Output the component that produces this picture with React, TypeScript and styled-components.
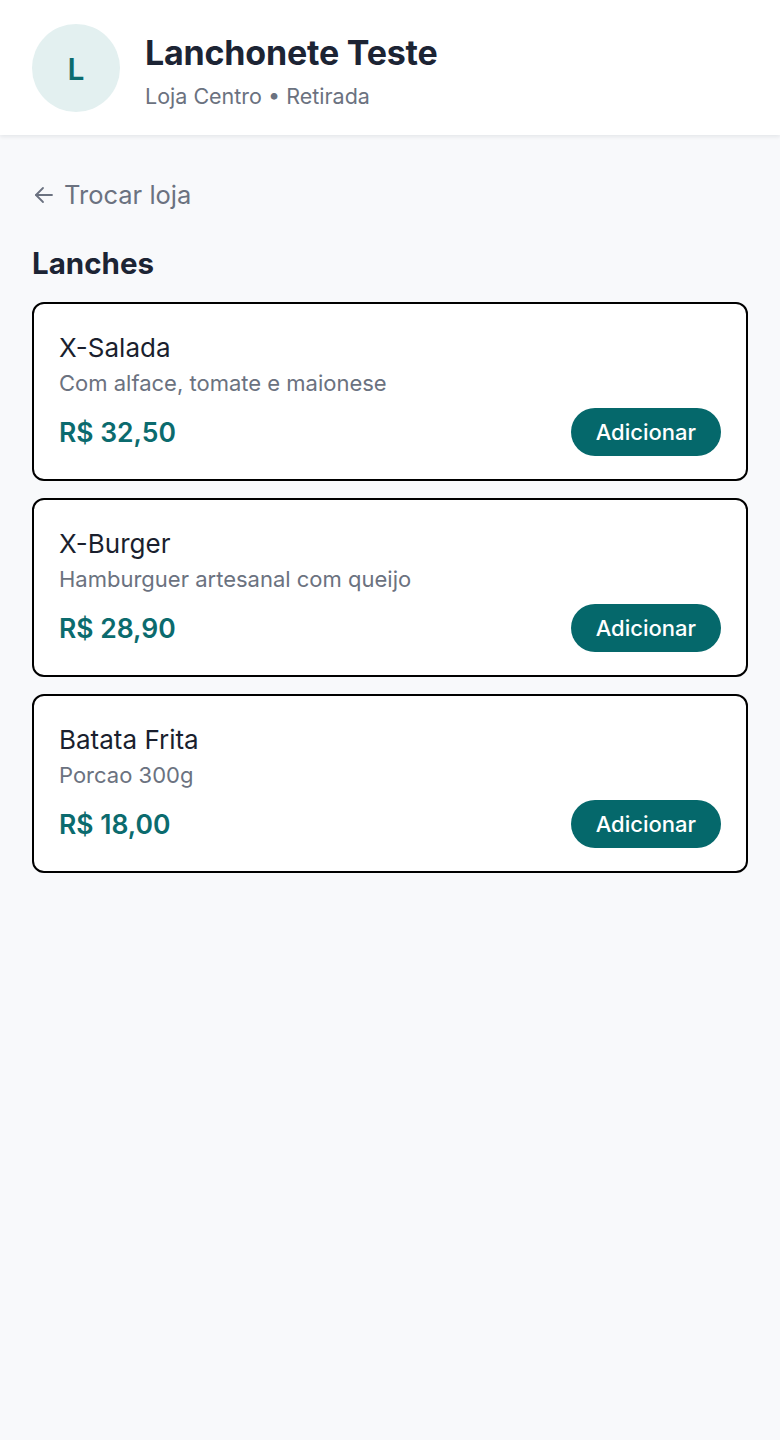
import React from "react";
import styled, { createGlobalStyle } from "styled-components";

const GlobalStyle = createGlobalStyle`
    * { box-sizing: border-box; }
    body {
        margin: 0;
        background: #f8f9fb;
        font-family: "Inter", "Noto Sans", sans-serif;
    }
`;

const Page = styled.div`
    min-height: 1440px;
    background: #f8f9fb;
`;

const Header = styled.header`
    display: flex;
    align-items: center;
    gap: 25px;
    height: 135px;
    padding: 0 32px;
    background: #ffffff;
    box-shadow: 0 2px 4px rgba(15, 23, 42, 0.08);
`;

const Avatar = styled.div`
    width: 88px;
    height: 88px;
    border-radius: 50%;
    background: #e3f0f0;
    color: #0b6b6e;
    display: flex;
    align-items: center;
    justify-content: center;
    font-size: 30px;
    font-weight: 600;
    padding-top: 3px;
`;

const StoreInfo = styled.div`
    display: flex;
    flex-direction: column;
    gap: 9px;
    margin-top: 7px;
`;

const StoreName = styled.h1`
    margin: 0;
    font-size: 34px;
    line-height: 40px;
    font-weight: 700;
    color: #1c2434;
    letter-spacing: -0.2px;
`;

const StoreMeta = styled.span`
    font-size: 21.5px;
    line-height: 28px;
    color: #6b7280;
`;

const Content = styled.main`
    padding: 44px 32px 40px;
`;

const BackLink = styled.a`
    display: inline-flex;
    align-items: center;
    gap: 8px;
    font-size: 25.5px;
    line-height: 32px;
    color: #6b7280;
    text-decoration: none;
    cursor: pointer;
`;

const SectionTitle = styled.h2`
    margin: 34px 0 21px;
    font-size: 29.5px;
    line-height: 36px;
    font-weight: 700;
    color: #1c2434;
`;

const List = styled.div`
    display: flex;
    flex-direction: column;
    gap: 17px;
`;

const Card = styled.div`
    background: #ffffff;
    border: 2px solid #000000;
    border-radius: 12px;
    padding: 28px 25px 23px;
`;

const ItemName = styled.div`
    font-size: 26px;
    line-height: 32px;
    color: #1a1f2e;
`;

const ItemDesc = styled.div`
    margin-top: 5px;
    font-size: 22px;
    line-height: 28px;
    color: #6b7280;
`;

const Footer = styled.div`
    display: flex;
    align-items: center;
    justify-content: space-between;
    margin-top: 11px;
`;

const Price = styled.span`
    font-size: 26.5px;
    font-weight: 600;
    color: #0b6b6e;
`;

const AddButton = styled.button`
    height: 48px;
    padding: 0 25px;
    border: none;
    border-radius: 24px;
    background: #05686b;
    color: #ffffff;
    font-family: inherit;
    font-size: 22px;
    font-weight: 500;
    cursor: pointer;
`;

const items = [
    { name: "X-Salada", desc: "Com alface, tomate e maionese", price: "R$ 32,50" },
    { name: "X-Burger", desc: "Hamburguer artesanal com queijo", price: "R$ 28,90" },
    { name: "Batata Frita", desc: "Porcao 300g", price: "R$ 18,00" },
];

const App: React.FC = () => {
    return (
        <Page>
            <GlobalStyle />
            <Header>
                <Avatar>L</Avatar>
                <StoreInfo>
                    <StoreName>Lanchonete Teste</StoreName>
                    <StoreMeta>Loja Centro • Retirada</StoreMeta>
                </StoreInfo>
            </Header>
            <Content>
                <BackLink>
                    <svg width="24" height="24" viewBox="0 0 24 24" fill="none" stroke="#6b7280" strokeWidth="1.8" strokeLinecap="round" strokeLinejoin="round">
                        <path d="M20 12H4" />
                        <path d="M11 5l-7 7 7 7" />
                    </svg>
                    Trocar loja
                </BackLink>
                <SectionTitle>Lanches</SectionTitle>
                <List>
                    {items.map((item) => (
                        <Card key={item.name}>
                            <ItemName>{item.name}</ItemName>
                            <ItemDesc>{item.desc}</ItemDesc>
                            <Footer>
                                <Price>{item.price}</Price>
                                <AddButton>Adicionar</AddButton>
                            </Footer>
                        </Card>
                    ))}
                </List>
            </Content>
        </Page>
    );
};

export default App;
